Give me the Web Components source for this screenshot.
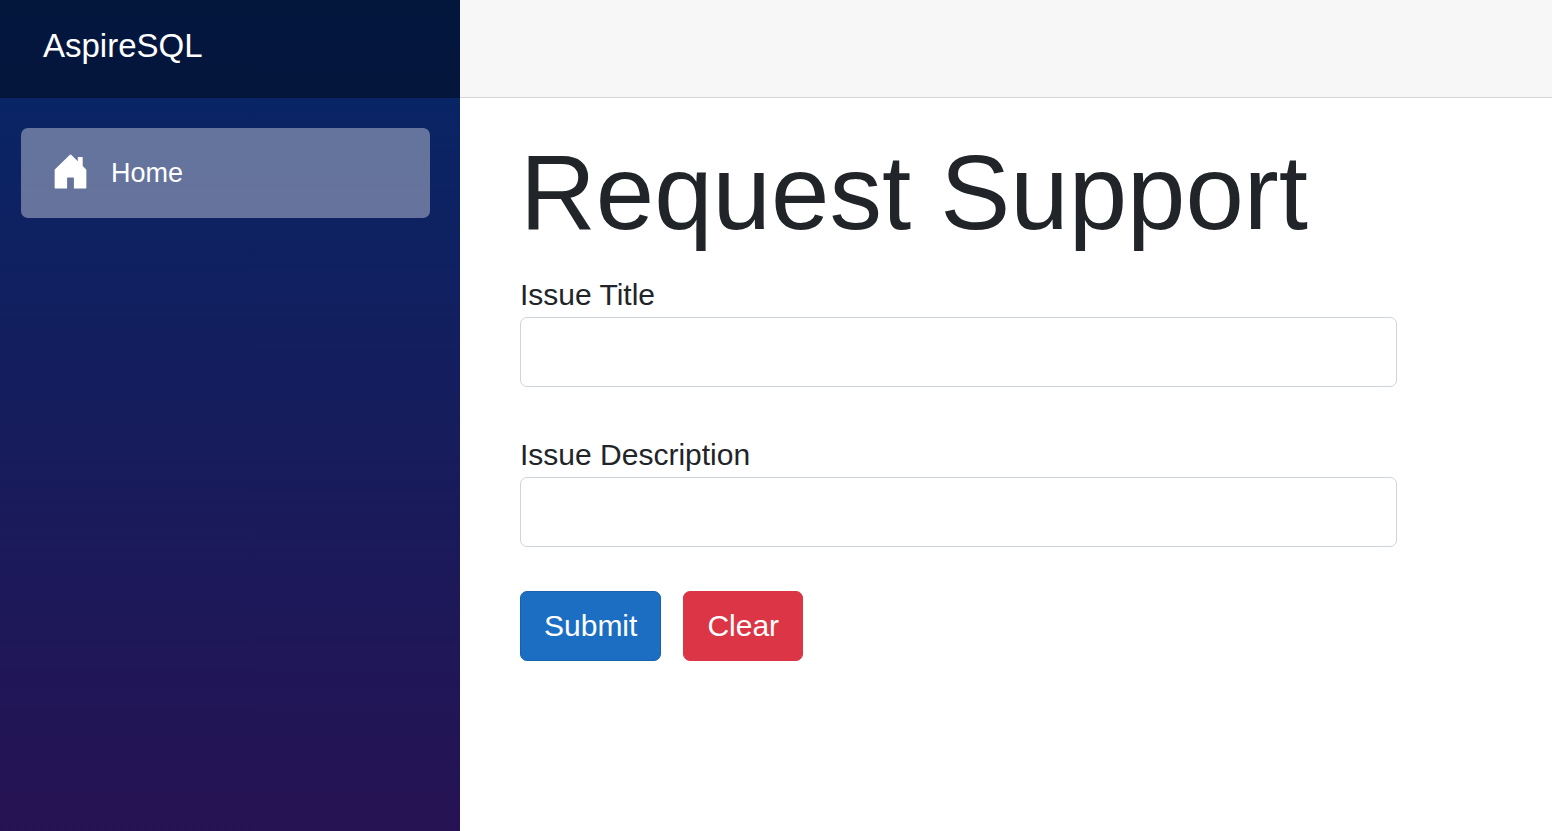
<!DOCTYPE html>
<html lang="en">
<head>
  <meta charset="utf-8">
  <meta name="viewport" content="width=device-width, initial-scale=1">
  <title>Request Support</title>
  <style>
    body {
      margin: 0;
      background: #fff;
      color: #212529;
      font: 30px/45px "Liberation Sans", Arial, sans-serif;
    }
  </style>
</head>
<body>
  <app-layout>
    <app-sidebar slot="sidebar" brand="AspireSQL">
      <app-nav-link href="#">Home</app-nav-link>
    </app-sidebar>
    <support-form heading="Request Support"></support-form>
  </app-layout>

  <script>
    /* Page shell: sidebar on the left, top row and content on the right */
    class AppLayout extends HTMLElement {
      constructor() {
        super();

        this.attachShadow({ mode: 'open' }).innerHTML = `
          <style>
            *, *::before, *::after { box-sizing: border-box; }

            :host {
              --top-row-height: 98px;
              display: grid;
              grid-template-columns: 460px minmax(0, 1fr);
              min-height: 100vh;
            }

            .top-row {
              height: var(--top-row-height);
              background: #f7f7f7;
              border-bottom: 1px solid #d6d5d5;
            }

            article {
              padding: 32px 0 32px 60px;
            }
          </style>
          <slot name="sidebar"></slot>
          <main>
            <div class="top-row"></div>
            <article><slot></slot></article>
          </main>
        `;
      }
    }

    class AppSidebar extends HTMLElement {
      constructor() {
        super();

        this.attachShadow({ mode: 'open' }).innerHTML = `
          <style>
            *, *::before, *::after { box-sizing: border-box; }

            :host {
              display: block;
              background: linear-gradient(180deg, #052767 0%, #3a0647 160%);
            }

            header {
              display: flex;
              align-items: center;
              height: var(--top-row-height, 98px);
              padding: 0 43px 8px;
              background: rgba(0, 0, 0, 0.4);
            }

            header a {
              color: #fff;
              font-size: 33px;
              text-decoration: none;
            }

            nav {
              display: flex;
              flex-direction: column;
              gap: 15px;
              padding: 30px 30px 30px 21px;
            }
          </style>
          <header><a href="#"></a></header>
          <nav><slot></slot></nav>
        `;
      }

      connectedCallback() {
        this.shadowRoot.querySelector('header a').textContent = this.getAttribute('brand');
      }
    }

    class AppNavLink extends HTMLElement {
      constructor() {
        super();

        this.attachShadow({ mode: 'open' }).innerHTML = `
          <style>
            :host { display: block; }

            a {
              display: flex;
              align-items: center;
              gap: 21px;
              height: 90px;
              padding: 0 30px;
              border-radius: 7px;
              background: rgba(255, 255, 255, 0.37);
              color: #fff;
              font-size: 27px;
              text-decoration: none;
            }

            svg {
              width: 39px;
              height: 39px;
              margin-bottom: 4px;
            }
          </style>
          <a>
            <svg viewBox="0 0 16 16" fill="currentColor" aria-hidden="true">
              <path d="M6.6 14.9v-4.2q0-.2.2-.2h2.4q.2 0 .2.2v4.2q0 .1.1.1h4.8q.2 0 .2-.2V7.4q0-.2-.15-.35L13 5.75V2.2q0-.2-.2-.2h-1.6q-.2 0-.2.2v1.55L8.25 1.1q-.25-.2-.5 0L1.65 7.05q-.15.15-.15.35v7.4q0 .2.2.2h4.8q.1 0 .1-.1Z"/>
            </svg>
            <span><slot></slot></span>
          </a>
        `;
      }

      connectedCallback() {
        this.shadowRoot.querySelector('a').href = this.getAttribute('href') || '#';
      }
    }

    class TextField extends HTMLElement {
      constructor() {
        super();

        this.attachShadow({ mode: 'open' }).innerHTML = `
          <style>
            :host { display: block; }

            label { display: block; }

            input {
              display: block;
              box-sizing: border-box;
              width: 100%;
              height: 70px;
              padding: 11px 22px;
              border: 1px solid #ced4da;
              border-radius: 7px;
              background: #fff;
              color: inherit;
              font: inherit;
            }

            input:focus {
              outline: 4px solid #258cfb;
            }
          </style>
          <label for="field"><slot></slot></label>
          <input id="field" type="text">
        `;
      }

      clear() {
        this.shadowRoot.querySelector('input').value = '';
      }
    }

    class AppButton extends HTMLElement {
      constructor() {
        super();

        this.attachShadow({ mode: 'open' }).innerHTML = `
          <style>
            :host {
              --button-color: #1b6ec2;
              --button-border: #1861ac;
              display: block;
            }

            :host([variant="danger"]) {
              --button-color: #dc3545;
              --button-border: #dc3545;
            }

            button {
              display: block;
              box-sizing: border-box;
              height: 70px;
              padding: 0 23px 2px;
              border: 1px solid var(--button-border);
              border-radius: 7px;
              background: var(--button-color);
              color: #fff;
              font: inherit;
              cursor: pointer;
            }
          </style>
          <button type="button"><slot></slot></button>
        `;
      }
    }

    class SupportForm extends HTMLElement {
      constructor() {
        super();

        this.attachShadow({ mode: 'open' }).innerHTML = `
          <style>
            :host {
              display: block;
              width: 85%;
            }

            h1 {
              margin: 0 0 16px;
              font-size: 105px;
              font-weight: 400;
              line-height: 126px;
            }

            .fields {
              display: flex;
              flex-direction: column;
              gap: 45px;
            }

            .actions {
              display: flex;
              gap: 22px;
              margin-top: 44px;
            }
          </style>
          <h1></h1>
          <form>
            <div class="fields">
              <text-field>Issue Title</text-field>
              <text-field>Issue Description</text-field>
            </div>
            <div class="actions">
              <app-button>Submit</app-button>
              <app-button id="clear" variant="danger">Clear</app-button>
            </div>
          </form>
        `;
      }

      connectedCallback() {
        this.shadowRoot.querySelector('h1').textContent = this.getAttribute('heading');

        this.shadowRoot.querySelector('#clear').addEventListener('click', () => {
          this.shadowRoot.querySelectorAll('text-field').forEach((field) => field.clear());
        });
      }
    }

    customElements.define('app-layout', AppLayout);
    customElements.define('app-sidebar', AppSidebar);
    customElements.define('app-nav-link', AppNavLink);
    customElements.define('text-field', TextField);
    customElements.define('app-button', AppButton);
    customElements.define('support-form', SupportForm);
  </script>
</body>
</html>
